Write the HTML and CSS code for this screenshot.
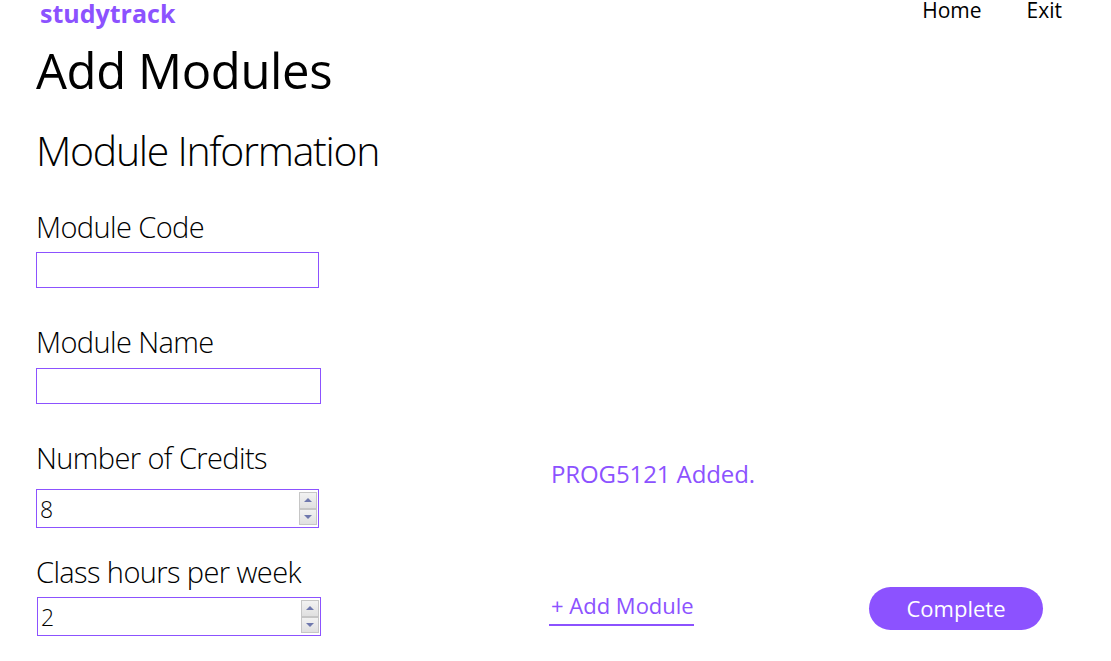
FILE: index.html
```html
<!DOCTYPE html>
<html lang="en">
<head>
<meta charset="utf-8">
<title>studytrack - Add Modules</title>
<link rel="stylesheet" href="styles.css">
</head>
<body>
<header class="topbar">
  <div class="logo">studytrack</div>
  <nav class="nav">
    <a class="nav-link" href="#">Home</a>
    <a class="nav-link" href="#">Exit</a>
  </nav>
</header>
<main class="page">
  <h1 class="title">Add Modules</h1>
  <h2 class="subtitle">Module Information</h2>
  <div class="form-grid">
    <div class="field">
      <label class="label">Module Code</label>
      <div class="box box-a"><input class="text-input" type="text"></div>
    </div>
    <div class="empty"></div>

    <div class="field gap-lg">
      <label class="label">Module Name</label>
      <div class="box box-b"><input class="text-input" type="text"></div>
    </div>
    <div class="empty"></div>

    <div class="field gap-lg">
      <label class="label">Number of Credits</label>
      <div class="box box-a num">
        <input class="text-input" type="text" value="8">
        <div class="spinner"><span class="spin up"></span><span class="spin down"></span></div>
      </div>
    </div>
    <div class="message-cell gap-lg"><p class="message">PROG5121 Added.</p></div>

    <div class="field gap-md">
      <label class="label">Class hours per week</label>
      <div class="box box-c num2">
        <input class="text-input" type="text" value="2">
        <div class="spinner"><span class="spin up"></span><span class="spin down"></span></div>
      </div>
    </div>
    <div class="actions gap-md">
      <a class="add-link" href="#">+ Add Module</a>
      <button class="complete" type="button">Complete</button>
    </div>
  </div>
</main>
</body>
</html>
```

FILE: styles.css
```css
* { box-sizing: border-box; }
html, body { margin: 0; padding: 0; background: #fff; }
body {
  font-family: "Open Sans", "Noto Sans", sans-serif;
  color: #000;
  width: 1111px;
  height: 661px;
  overflow: hidden;
}
.topbar {
  display: flex;
  justify-content: space-between;
  align-items: flex-start;
  padding: 0 49px 0 40px;
  height: 28px;
}
.logo {
  color: #8c52ff;
  font-weight: 700;
  font-size: 25px;
  line-height: 27px;
}
.nav { display: flex; gap: 45px; }
.nav-link {
  color: #000;
  text-decoration: none;
  font-size: 21px;
  line-height: 20px;
  font-weight: 400;
}
.page { padding-left: 36px; }
.title {
  margin: 12px 0 0;
  font-size: 49px;
  font-weight: 400;
  line-height: 60px;
  letter-spacing: -0.4px;
}
.subtitle {
  margin: 25px 0 0;
  font-size: 41px;
  font-weight: 300;
  line-height: 50px;
  letter-spacing: -1.3px;
}
.form-grid {
  display: grid;
  grid-template-columns: 515px 1fr;
  margin-top: 32px;
}
.gap-lg { margin-top: 34px; }
.gap-md { margin-top: 24px; }
.field { display: flex; flex-direction: column; }
.label {
  font-size: 29px;
  font-weight: 300;
  line-height: 40px;
  letter-spacing: -0.6px;
}
.box {
  display: flex;
  border: 1px solid #8c52ff;
  height: 36px;
  margin-top: 5px;
  background: #fff;
}
.box-a { width: 283px; }
.box-b { width: 285px; margin-top: 6px; }
.box-c { width: 284px; margin-left: 1px; }
.num { height: 39px; margin-top: 11px; }
.num2 { height: 39px; margin-top: 5px; }
.text-input {
  flex: 1;
  min-width: 0;
  border: 0;
  outline: none;
  padding: 0 0 0 3px;
  font-family: inherit;
  font-size: 23px;
  font-weight: 300;
  color: #000;
  background: transparent;
}
.spinner {
  display: flex;
  flex-direction: column;
  width: 19px;
  padding: 2px 1px 2px 0;
}
.spin {
  flex: 1;
  background: linear-gradient(#f2f2f2, #e0e0e0);
  border: 1px solid #c6c6c6;
  display: flex;
  align-items: center;
  justify-content: center;
}
.spin.up::before {
  content: "";
  border-left: 4px solid transparent;
  border-right: 4px solid transparent;
  border-bottom: 4px solid #6f78ad;
}
.spin.down::before {
  content: "";
  border-left: 4px solid transparent;
  border-right: 4px solid transparent;
  border-top: 4px solid #6f78ad;
}
.message-cell { display: flex; align-items: flex-start; }
.message {
  margin: 21px 0 0;
  color: #8c52ff;
  font-size: 24px;
  line-height: 30px;
  font-weight: 400;
  letter-spacing: -0.1px;
}
.actions {
  display: flex;
  align-items: flex-start;
  padding-right: 68px;
}
.add-link {
  margin: 38px 0 0 -2px;
  color: #8c52ff;
  text-decoration: none;
  font-size: 22px;
  line-height: 30px;
  border-bottom: 2px solid #8c52ff;
  padding: 0 0 4px 2px;
}
.complete {
  margin: 35px 0 0 auto;
  width: 174px;
  height: 43px;
  border: 0;
  border-radius: 22px;
  background: #8c52ff;
  color: #fff;
  font-family: inherit;
  font-size: 22px;
  line-height: 43px;
  padding: 0;
}
```
